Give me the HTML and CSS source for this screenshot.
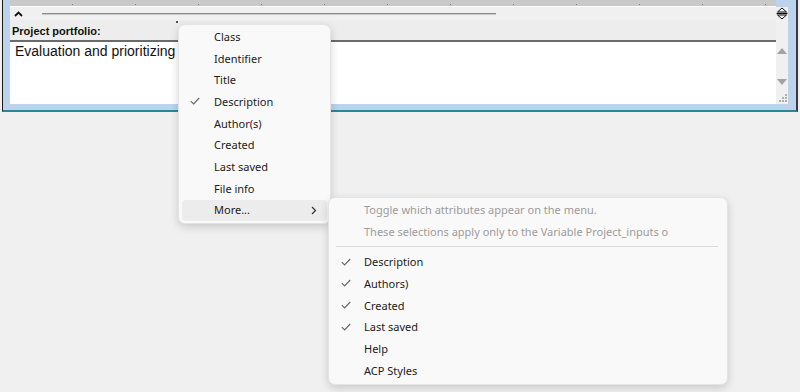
FILE: index.html
```html
<!DOCTYPE html>
<html>
<head>
<meta charset="utf-8">
<link rel="stylesheet" href="styles.css">
</head>
<body>
<div class="window">
  <div class="frame">
    <div class="main">
      <div class="ruler"></div>
      <div class="toolbar">
        <span class="collapse"><svg width="9" height="6" viewBox="0 0 9 6"><polyline points="1,5 4.5,1.5 8,5" fill="none" stroke="#111" stroke-width="1.8"/></svg></span>
        <span class="rule"></span>
      </div>
      <div class="label">Project portfolio:</div>
      <div class="textarea">Evaluation and prioritizing</div>
    </div>
    <div class="side">
      <div class="ruler-end"></div>
      <div class="sizer"><svg width="12" height="13" viewBox="0 0 12 13"><polygon points="6,1 10.5,5 1.5,5" fill="none" stroke="#111" stroke-width="1"/><line x1="0.5" y1="6.5" x2="11.5" y2="6.5" stroke="#111" stroke-width="1.2"/><polygon points="1.5,8 10.5,8 6,12" fill="none" stroke="#111" stroke-width="1"/></svg></div>
      <div class="side-gap"></div>
      <div class="scroll">
        <svg class="arr up" width="10" height="6" viewBox="0 0 10 6"><polygon points="5,0 10,6 0,6" fill="#a3a3a3"/></svg>
        <svg class="arr down" width="10" height="6" viewBox="0 0 10 6"><polygon points="0,0 10,0 5,6" fill="#a3a3a3"/></svg>
        <svg class="grip" width="8" height="8" viewBox="0 0 8 8"><g fill="#b0b0b0"><rect x="6" y="0" width="2" height="2"/><rect x="3" y="3" width="2" height="2"/><rect x="6" y="3" width="2" height="2"/><rect x="0" y="6" width="2" height="2"/><rect x="3" y="6" width="2" height="2"/><rect x="6" y="6" width="2" height="2"/></g></svg>
      </div>
    </div>
  </div>
</div>

<span class="dot"></span>

<div class="menu menu-main">
  <div class="item"><span class="chk"></span>Class</div>
  <div class="item"><span class="chk"></span>Identifier</div>
  <div class="item"><span class="chk"></span>Title</div>
  <div class="item"><span class="chk"><svg width="10" height="8" viewBox="0 0 10 8"><polyline points="0.8,4.2 3.6,7 9.2,1" fill="none" stroke="#666" stroke-width="1.1"/></svg></span>Description</div>
  <div class="item"><span class="chk"></span>Author(s)</div>
  <div class="item"><span class="chk"></span>Created</div>
  <div class="item"><span class="chk"></span>Last saved</div>
  <div class="item"><span class="chk"></span>File info</div>
  <div class="item active"><span class="chk"></span>More...<svg class="sub" width="6" height="9" viewBox="0 0 6 9"><polyline points="1,1 4.5,4.5 1,8" fill="none" stroke="#333" stroke-width="1.2"/></svg></div>
</div>

<div class="menu menu-sub">
  <div class="item dim"><span class="chk"></span>Toggle which attributes appear on the menu.</div>
  <div class="item dim"><span class="chk"></span>These selections apply only to the Variable Project_inputs o</div>
  <div class="sep"></div>
  <div class="item"><span class="chk"><svg width="10" height="8" viewBox="0 0 10 8"><polyline points="0.8,4.2 3.6,7 9.2,1" fill="none" stroke="#666" stroke-width="1.1"/></svg></span>Description</div>
  <div class="item"><span class="chk"><svg width="10" height="8" viewBox="0 0 10 8"><polyline points="0.8,4.2 3.6,7 9.2,1" fill="none" stroke="#666" stroke-width="1.1"/></svg></span>Authors)</div>
  <div class="item"><span class="chk"><svg width="10" height="8" viewBox="0 0 10 8"><polyline points="0.8,4.2 3.6,7 9.2,1" fill="none" stroke="#666" stroke-width="1.1"/></svg></span>Created</div>
  <div class="item"><span class="chk"><svg width="10" height="8" viewBox="0 0 10 8"><polyline points="0.8,4.2 3.6,7 9.2,1" fill="none" stroke="#666" stroke-width="1.1"/></svg></span>Last saved</div>
  <div class="item"><span class="chk"></span>Help</div>
  <div class="item"><span class="chk"></span>ACP Styles</div>
</div>
</body>
</html>
```

FILE: styles.css
```css
html, body {
  margin: 0;
  padding: 0;
  background: #f0f0f0;
  width: 800px;
  height: 392px;
  overflow: hidden;
  position: relative;
}

.window {
  margin-left: 2px;
  width: 793px;
  border-left: 1px solid #1a1a1a;
  border-right: 2px solid #3a3a3a;
  border-bottom: 2px solid #2b8797;
}

.frame {
  display: flex;
  background: #bcd3ed;
  padding: 0 8px 6px 7px;
}

.main {
  flex: 1;
  display: flex;
  flex-direction: column;
}

.ruler {
  height: 6px;
  border-bottom: 1px solid #ffffff;
  background: #c9c9c9 repeating-linear-gradient(90deg, transparent 0 62px, #7a7a7a 62px 63px) 0 4px / 100% 1px no-repeat;
  background-color: #c9c9c9;
}

.toolbar {
  height: 13px;
  background: #f0f0f0;
  display: flex;
  align-items: center;
}

.collapse {
  width: 12px;
  margin-left: 2px;
  display: flex;
  justify-content: center;
}

.collapse svg { display: block; }

.rule {
  margin-left: 18px;
  width: 454px;
  height: 1px;
  background: #8c8c8c;
  border-bottom: 1px solid #c8c8c8;
}

.label {
  height: 20px;
  background: #ededed;
  font-family: "Liberation Sans", Arial, sans-serif;
  font-weight: bold;
  font-size: 11px;
  line-height: 22px;
  padding-left: 2px;
  color: #111;
  border-bottom: 2px solid #6b6b6b;
}

.textarea {
  height: 62px;
  background: #ffffff;
  font-family: "Liberation Sans", Arial, sans-serif;
  font-size: 14px;
  line-height: 16px;
  padding: 1px 0 0 5px;
  box-sizing: border-box;
  color: #111;
}

.side {
  width: 12px;
  display: grid;
  grid-template-rows: 7px 13px 20px 1fr;
}

.ruler-end {
  background: #bcd3ed;
}

.sizer {
  background: #f0f0f0;
  display: flex;
  justify-content: center;
  align-items: flex-start;
  overflow: hidden;
}

.sizer svg { display: block; }

.side-gap {
  background: #f0f0f0;
}

.scroll {
  background: #f0f0f0;
  display: flex;
  flex-direction: column;
  align-items: center;
  padding-top: 8px;
}

.scroll .arr { display: block; }
.scroll .down { margin-top: 25px; }
.scroll .grip { display: block; margin-top: 9px; align-self: flex-end; margin-right: 1px; }

.dot {
  position: absolute;
  left: 176px;
  top: 21px;
  width: 2px;
  height: 2px;
  background: #555;
}

.menu {
  position: absolute;
  background: #f9f9f9;
  border: 1px solid #e4e4e4;
  border-radius: 7px;
  box-shadow: 0 3px 9px rgba(0,0,0,0.16);
  font-family: "Noto Sans", "Segoe UI", sans-serif;
  font-size: 11px;
  color: #1b1b1b;
  box-sizing: border-box;
}

.menu-main {
  left: 178px;
  top: 24px;
  width: 153px;
  height: 200px;
  padding: 1px 3px;
}

.menu-sub {
  left: 328px;
  top: 197px;
  width: 400px;
  height: 188px;
  padding: 1px 3px;
}

.item {
  height: 21.7px;
  display: flex;
  align-items: center;
  border-radius: 4px;
  position: relative;
  white-space: nowrap;
  padding-bottom: 1px;
  box-sizing: border-box;
}

.chk {
  width: 32px;
  padding-left: 8px;
  box-sizing: border-box;
  display: flex;
  align-items: center;
}

.chk svg { display: block; }

.menu-sub .chk { padding-left: 9px; }

.item.active {
  background: #ececec;
}

.item .sub {
  position: absolute;
  right: 10px;
  top: 6px;
}

.item.dim {
  color: #9c9c9c;
}

.sep {
  height: 1px;
  background: #dcdcdc;
  margin: 4px 6px 4px 4px;
}
```
